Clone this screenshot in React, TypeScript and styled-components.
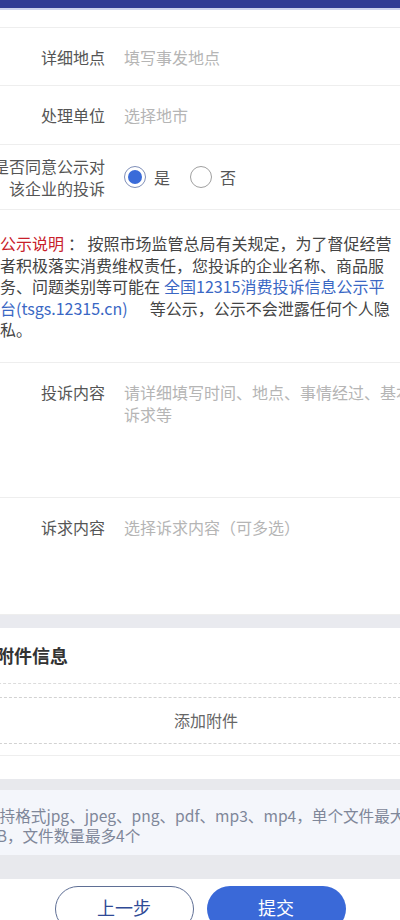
import styled, { createGlobalStyle } from "styled-components";

const GlobalStyle = createGlobalStyle`
  html, body {
    margin: 0;
    padding: 0;
    background: #ffffff;
    overflow: hidden;
  }
  body {
    font-family: "Noto Sans CJK SC", "Noto Sans", sans-serif;
  }
`;

// the page is wider than the window and sits centred on it
const Page = styled.div`
  width: 464px;
  margin-left: -32px;
  display: flex;
  flex-direction: column;
  background: #ffffff;
`;

const TopBar = styled.div`
  height: 8px;
  background: #2f3b94;
  border-bottom: 2px solid #cbd2ec;
`;

const Row = styled.div<{ $height: number; $top?: boolean }>`
  display: flex;
  align-items: ${(p) => (p.$top ? "flex-start" : "center")};
  min-height: ${(p) => p.$height}px;
  box-sizing: border-box;
  padding-top: ${(p) => (p.$top ? "18px" : "0")};
  border-bottom: 1px solid #eeeeee;
`;

const Label = styled.div`
  width: 114px;
  margin-left: 23px;
  flex-shrink: 0;
  text-align: right;
  font-size: 16px;
  line-height: 22px;
  color: #555555;
`;

const Value = styled.div`
  flex: 1;
  margin-left: 19px;
  margin-right: 12px;
  font-size: 16px;
  line-height: 22px;
  color: #b5b5b5;
`;

const RadioGroup = styled.div`
  display: flex;
  align-items: center;
  margin-left: 19px;
`;

const RadioItem = styled.div`
  display: flex;
  align-items: center;
  gap: 8px;
  margin-right: 20px;
  font-size: 16px;
  color: #555555;
`;

const RadioCircle = styled.span<{ $checked?: boolean }>`
  width: 22px;
  height: 22px;
  box-sizing: border-box;
  border-radius: 50%;
  border: 1px solid ${(p) => (p.$checked ? "#7f8fb8" : "#a0a0a0")};
  display: flex;
  align-items: center;
  justify-content: center;

  &::after {
    content: "";
    width: 14px;
    height: 14px;
    border-radius: 50%;
    background: ${(p) => (p.$checked ? "#3a6bd9" : "transparent")};
  }
`;

const Notice = styled.div`
  padding: 23px 36px 21px 32px;
  font-size: 16px;
  line-height: 21.5px;
  color: #444444;
  border-bottom: 1px solid #eeeeee;
`;

const NoticeTitle = styled.span`
  color: #c8202a;
  margin-right: 4px;
`;

const NoticeLink = styled.span`
  color: #3a67c4;
  margin-left: 4px;
  margin-right: 22px;
`;

const Band = styled.div`
  height: 13px;
  background: #e9eaef;
`;

const Section = styled.div`
  display: flex;
  flex-direction: column;
  padding-bottom: 11px;
  border-bottom: 1px solid #eeeeee;
`;

const SectionTitle = styled.div`
  height: 55px;
  display: flex;
  align-items: center;
  padding-left: 28px;
  font-size: 18px;
  font-weight: 700;
  color: #333333;
  border-bottom: 1px dashed #dcdcdc;
`;

const AddBox = styled.div`
  margin: 13px 16px 0;
  height: 47px;
  box-sizing: border-box;
  border: 1px dashed #d2d2d2;
  display: flex;
  align-items: center;
  justify-content: center;
  padding-left: 12px;
  font-size: 16px;
  color: #666666;
`;

const Spacer = styled.div<{ $height: number }>`
  height: ${(p) => p.$height}px;
`;

const HintWrap = styled.div`
  background: #e8e9ed;
  padding: 11px 0 24px;
`;

const Hint = styled.div`
  background: #f4f6fb;
  padding: 15px 6px 10px 16px;
  font-size: 15.6px;
  line-height: 20px;
  color: #7f8799;
`;

const Footer = styled.div`
  display: flex;
  justify-content: center;
  gap: 13px;
  padding-top: 7px;
  background: #ffffff;
`;

const Button = styled.button<{ $primary?: boolean }>`
  width: 139px;
  height: 46px;
  border-radius: 23px;
  box-sizing: border-box;
  font-family: inherit;
  font-size: 18px;
  line-height: 1;
  padding: 0 0 4px;
  border: ${(p) => (p.$primary ? "none" : "1.5px solid #5f6f95")};
  background: ${(p) => (p.$primary ? "#3a69d8" : "#ffffff")};
  color: ${(p) => (p.$primary ? "#ffffff" : "#2f4a96")};
`;

export default function App() {
  return (
    <>
      <GlobalStyle />
      <Page>
        <TopBar />
        <Row $height={18} />
        <Row $height={58}>
          <Label>详细地点</Label>
          <Value>填写事发地点</Value>
        </Row>
        <Row $height={59}>
          <Label>处理单位</Label>
          <Value>选择地市</Value>
        </Row>
        <Row $height={65}>
          <Label>
            是否同意公示对
            <br />
            该企业的投诉
          </Label>
          <RadioGroup>
            <RadioItem>
              <RadioCircle $checked />是
            </RadioItem>
            <RadioItem>
              <RadioCircle />否
            </RadioItem>
          </RadioGroup>
        </Row>
        <Notice>
          <NoticeTitle>公示说明</NoticeTitle>： 按照市场监管总局有关规定，为了督促经营者积极落实消费维权责任，您投诉的企业名称、商品服务、问题类别等可能在
          <NoticeLink>全国12315消费投诉信息公示平台(tsgs.12315.cn)</NoticeLink>
          等公示，公示不会泄露任何个人隐私。
        </Notice>
        <Row $height={135} $top>
          <Label>投诉内容</Label>
          <Value>请详细填写时间、地点、事情经过、基本诉求等</Value>
        </Row>
        <Row $height={117} $top>
          <Label>诉求内容</Label>
          <Value>选择诉求内容（可多选）</Value>
        </Row>
        <Band />
        <Section>
          <SectionTitle>附件信息</SectionTitle>
          <AddBox>添加附件</AddBox>
        </Section>
        <Spacer $height={23} />
        <HintWrap>
          <Hint>
            支持格式jpg、jpeg、png、pdf、mp3、mp4，单个文件最大20
            <br />
            MB，文件数量最多4个
          </Hint>
        </HintWrap>
        <Footer>
          <Button>上一步</Button>
          <Button $primary>提交</Button>
        </Footer>
      </Page>
    </>
  );
}
